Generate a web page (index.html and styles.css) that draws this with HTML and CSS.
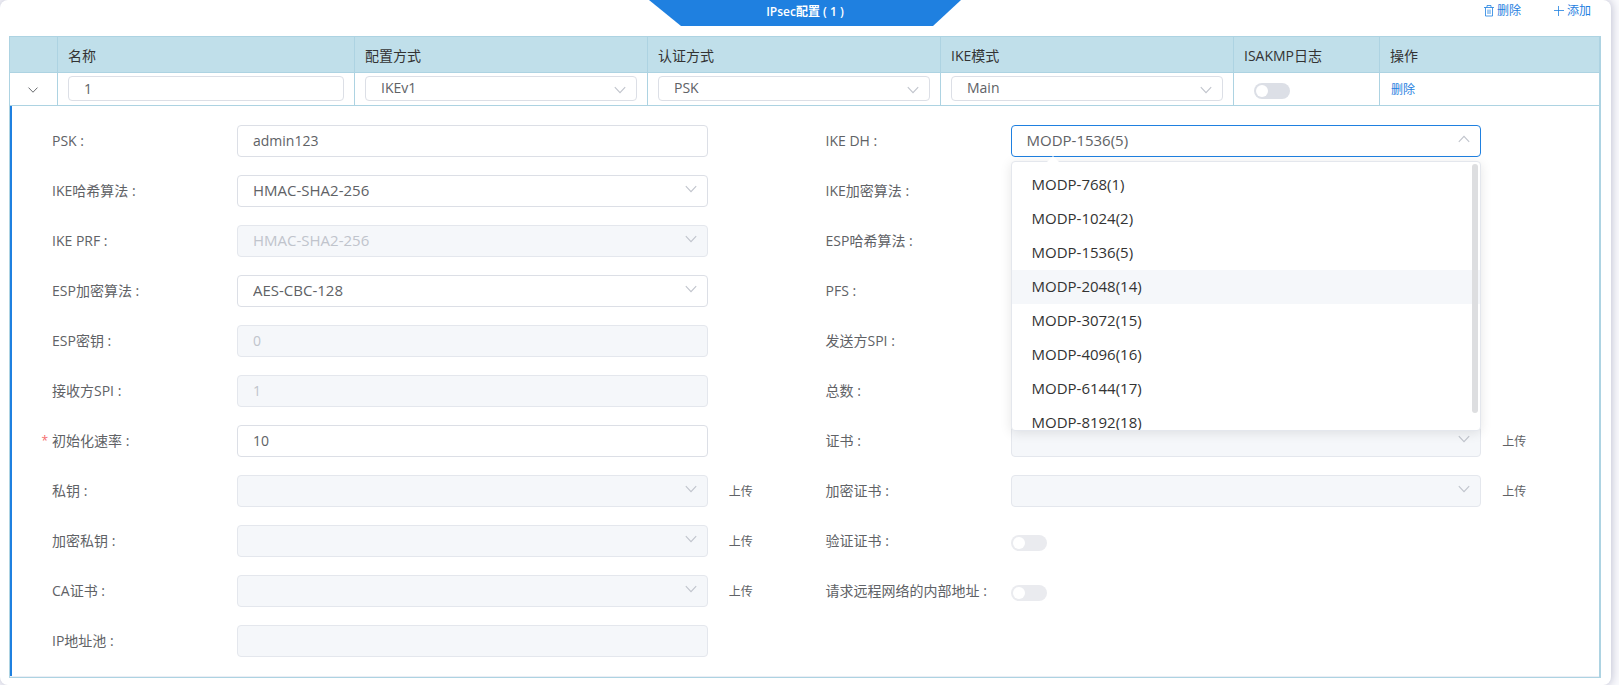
FILE: index.html
```html
<!DOCTYPE html>
<html lang="zh-CN">
<head>
<meta charset="utf-8">
<title>IPsec配置</title>
<link rel="stylesheet" href="styles.css">
</head>
<body>
<svg class="sprite" aria-hidden="true">
  <symbol id="chevron" viewBox="0 0 14 14"><path d="M1.8 4.2 7 9.6l5.2-5.4" fill="none" stroke="currentColor" stroke-width="1.1"/></symbol>
  <symbol id="trash" viewBox="0 0 12 12"><path d="M1 2.5h10M4 2.5v-2h4v2M2.5 2.5v8.5h7v-8.5M5 4.5v4.5M7 4.5v4.5" fill="none" stroke="currentColor" stroke-width="0.8"/></symbol>
  <symbol id="plus" viewBox="0 0 12 12"><path d="M5.5 1v10M1 5.5h10" fill="none" stroke="currentColor" stroke-width="0.8"/></symbol>
</svg>
<main class="card">
  <header class="topbar">
    <h1 class="banner">IPsec配置 ( 1 )</h1>
    <div class="actions">
      <button class="link" type="button"><svg class="action-icon"><use href="#trash"/></svg>删除</button>
      <button class="link" type="button"><svg class="action-icon"><use href="#plus"/></svg>添加</button>
    </div>
  </header>

  <table class="grid">
    <colgroup>
      <col class="col-expand"><col class="col-name"><col><col><col><col class="col-log"><col class="col-op">
    </colgroup>
    <thead>
      <tr><th></th><th>名称</th><th>配置方式</th><th>认证方式</th><th>IKE模式</th><th>ISAKMP日志</th><th>操作</th></tr>
    </thead>
    <tbody>
      <tr class="record">
        <td class="expand-cell"><button class="expand" type="button" aria-label="收起"><svg class="expand-icon"><use href="#chevron"/></svg></button></td>
        <td><input class="field small" type="text" value="1" aria-label="名称"></td>
        <td><div class="pick"><select class="field small" aria-label="配置方式"><option>IKEv1</option></select><svg class="arrow"><use href="#chevron"/></svg></div></td>
        <td><div class="pick"><select class="field small" aria-label="认证方式"><option>PSK</option></select><svg class="arrow"><use href="#chevron"/></svg></div></td>
        <td><div class="pick"><select class="field small" aria-label="IKE模式"><option>Main</option></select><svg class="arrow"><use href="#chevron"/></svg></div></td>
        <td class="log-cell"><input class="switch" type="checkbox" role="switch" aria-label="ISAKMP日志"></td>
        <td class="op-cell"><button class="link" type="button">删除</button></td>
      </tr>
      <tr>
        <td class="detail" colspan="7">
          <form class="form">
            <div class="item"><label for="psk">PSK :</label><div class="control"><input class="field" id="psk" type="text" value="admin123"></div></div>
            <div class="item"><label for="dh">IKE DH :</label>
              <div class="control pick">
                <select class="field open" id="dh"><option>MODP-1536(5)</option></select>
                <svg class="arrow up"><use href="#chevron"/></svg>
                <div class="menu">
                  <ul class="options" role="listbox" aria-label="IKE DH">
                    <li role="option">MODP-768(1)</li>
                    <li role="option">MODP-1024(2)</li>
                    <li role="option">MODP-1536(5)</li>
                    <li role="option" class="hover">MODP-2048(14)</li>
                    <li role="option">MODP-3072(15)</li>
                    <li role="option">MODP-4096(16)</li>
                    <li role="option">MODP-6144(17)</li>
                    <li role="option">MODP-8192(18)</li>
                  </ul>
                  <span class="thumb"></span>
                </div>
              </div>
            </div>
            <div class="item"><label for="ikehash">IKE哈希算法 :</label><div class="control pick"><select class="field" id="ikehash"><option>HMAC-SHA2-256</option></select><svg class="arrow"><use href="#chevron"/></svg></div></div>
            <div class="item"><label for="ikeenc">IKE加密算法 :</label><div class="control pick"><select class="field" id="ikeenc"></select><svg class="arrow"><use href="#chevron"/></svg></div></div>
            <div class="item"><label for="prf">IKE PRF :</label><div class="control pick"><select class="field" id="prf" disabled><option>HMAC-SHA2-256</option></select><svg class="arrow"><use href="#chevron"/></svg></div></div>
            <div class="item"><label for="esphash">ESP哈希算法 :</label><div class="control pick"><select class="field" id="esphash"></select><svg class="arrow"><use href="#chevron"/></svg></div></div>
            <div class="item"><label for="espenc">ESP加密算法 :</label><div class="control pick"><select class="field" id="espenc"><option>AES-CBC-128</option></select><svg class="arrow"><use href="#chevron"/></svg></div></div>
            <div class="item"><label for="pfs">PFS :</label><div class="control pick"><select class="field" id="pfs"></select><svg class="arrow"><use href="#chevron"/></svg></div></div>
            <div class="item"><label for="espkey">ESP密钥 :</label><div class="control"><input class="field" id="espkey" type="text" value="0" disabled></div></div>
            <div class="item"><label for="outspi">发送方SPI :</label><div class="control"><input class="field" id="outspi" type="text" disabled></div></div>
            <div class="item"><label for="inspi">接收方SPI :</label><div class="control"><input class="field" id="inspi" type="text" value="1" disabled></div></div>
            <div class="item"><label for="total">总数 :</label><div class="control"><input class="field" id="total" type="text"></div></div>
            <div class="item"><label class="required" for="rate">初始化速率 :</label><div class="control"><input class="field" id="rate" type="text" value="10"></div></div>
            <div class="item"><label for="cert">证书 :</label><div class="control pick"><select class="field" id="cert" disabled></select><svg class="arrow"><use href="#chevron"/></svg></div><button class="upload" type="button">上传</button></div>
            <div class="item"><label for="key">私钥 :</label><div class="control pick"><select class="field" id="key" disabled></select><svg class="arrow"><use href="#chevron"/></svg></div><button class="upload" type="button">上传</button></div>
            <div class="item"><label for="enccert">加密证书 :</label><div class="control pick"><select class="field" id="enccert" disabled></select><svg class="arrow"><use href="#chevron"/></svg></div><button class="upload" type="button">上传</button></div>
            <div class="item"><label for="enckey">加密私钥 :</label><div class="control pick"><select class="field" id="enckey" disabled></select><svg class="arrow"><use href="#chevron"/></svg></div><button class="upload" type="button">上传</button></div>
            <div class="item"><label for="verify">验证证书 :</label><div class="control toggle"><input class="switch" id="verify" type="checkbox" role="switch" disabled></div></div>
            <div class="item"><label for="ca">CA证书 :</label><div class="control pick"><select class="field" id="ca" disabled></select><svg class="arrow"><use href="#chevron"/></svg></div><button class="upload" type="button">上传</button></div>
            <div class="item"><label for="inner">请求远程网络的内部地址 :</label><div class="control toggle"><input class="switch" id="inner" type="checkbox" role="switch" disabled></div></div>
            <div class="item"><label for="pool">IP地址池 :</label><div class="control"><input class="field" id="pool" type="text" disabled></div></div>
          </form>
        </td>
      </tr>
    </tbody>
  </table>
</main>
</body>
</html>
```

FILE: styles.css
```css
* { box-sizing: border-box; }

body {
  margin: 0;
  background: #fafafd;
  color: #606266;
  font: 14px/20px "Open Sans", "Noto Sans CJK SC", sans-serif;
}

button, input, select { font: inherit; }
button { padding: 0; border: 0; background: none; cursor: pointer; }

.sprite { position: absolute; width: 0; height: 0; }

.card {
  margin-right: 8px;
  padding: 0 10px 7px 9px;
  background: #fff;
  border-radius: 8px;
  box-shadow: 0 0 10px 1px #bfc1d2;
}

.topbar {
  display: grid;
  grid-template-columns: 1fr 312px 1fr;
  height: 36px;
}

.banner {
  grid-column: 2;
  height: 26px;
  margin: 0;
  background: #1f80e0;
  clip-path: polygon(0 0, 100% 0, 284px 100%, 32px 100%);
  color: #fff;
  font-size: 12px;
  font-weight: 600;
  line-height: 24px;
  text-align: center;
}

.actions {
  display: flex;
  justify-content: flex-end;
  gap: 32px;
  height: 22px;
  padding-right: 10px;
}

.link {
  display: inline-flex;
  align-items: center;
  gap: 2px;
  color: #1f80e0;
  font-size: 12px;
}

.action-icon { width: 12px; height: 12px; }

.grid {
  width: 100%;
  table-layout: fixed;
  border: 1px solid #add3e2;
  border-right-width: 2px;
  border-spacing: 0;
}

.col-expand { width: 48px; }
.col-name { width: 297px; }
.col-log { width: 146px; }
.col-op { width: 219px; }

.grid th, .grid td {
  padding: 0 10px;
  border-bottom: 1px solid #add3e2;
  text-align: left;
}

.grid th:not(:last-child), .record td:not(:last-child) { border-right: 1px solid #add3e2; }

.grid th {
  height: 36px;
  padding-top: 2px;
  background: #c0dfea;
  color: #333;
  font-weight: 400;
}

.record td { height: 33px; padding-bottom: 2px; }
.record .expand-cell { padding: 2px 11px 0 10px; }
.expand, .expand-icon { display: block; width: 12px; height: 12px; margin: 0 auto; color: #606266; }
.record .log-cell { padding: 3px 10px 0 20px; }
.record .op-cell { padding: 1px 11px 0; }

.field {
  display: block;
  width: 100%;
  height: 32px;
  margin: 0;
  padding: 0 15px 2px;
  border: 1px solid #dcdfe6;
  border-radius: 4px;
  outline: 0;
  appearance: none;
  background: #fff;
  color: #606266;
}

.field.small { height: 25px; padding-bottom: 0; }
.field:disabled { border-color: #e4e7ed; background: #f5f7fa; color: #c0c4cc; opacity: 1; }
.field.open { border-color: #1f80e0; }
.form select { font-size: 15px; }

.pick { position: relative; }

.arrow {
  position: absolute;
  top: 7px;
  right: 10px;
  width: 14px;
  height: 14px;
  color: #c0c4cc;
  pointer-events: none;
}

.arrow.up { transform: rotate(180deg); }

.switch {
  display: block;
  width: 36px;
  height: 16px;
  margin: 0;
  border: 2px solid transparent;
  border-radius: 8px;
  appearance: none;
  background: #dcdfe6 border-box;
}

.switch::before {
  content: "";
  display: block;
  width: 12px;
  height: 12px;
  border-radius: 50%;
  background: #fff;
}

.switch:disabled { background-color: #eaebef; }

.grid .detail { padding: 0; border-bottom-color: #ebeef5; }

.form {
  display: grid;
  grid-template-columns: 1fr 1fr;
  row-gap: 18px;
  padding: 19px 0 19px 40px;
  border-left: 2px solid #1f80e0;
}

.item {
  display: grid;
  grid-template-columns: 185px minmax(0, 4fr) minmax(0, 1fr);
  align-items: center;
  height: 32px;
}

.item label { white-space: nowrap; line-height: 32px; }

.required { position: relative; }
.required::before { content: "*"; position: absolute; right: 100%; margin-right: 4px; color: #f56c6c; font-size: 12px; }

.toggle { padding-top: 4px; }

.upload { justify-self: start; margin-left: 21px; padding-top: 2px; color: #606266; font-size: 12px; }

.menu {
  position: absolute;
  z-index: 2;
  top: 36px;
  left: 0;
  width: 100%;
  height: 270px;
  border: 1px solid #e4e7ed;
  border-radius: 4px;
  background: #fff;
  box-shadow: 0 2px 12px rgba(0, 0, 0, 0.1);
}

.menu::before {
  content: "";
  position: absolute;
  top: -6px;
  left: 35px;
  border: 6px solid transparent;
  border-top: 0;
  border-bottom-color: #fff;
}

.options {
  height: 100%;
  margin: 0;
  padding: 6px 0;
  overflow: hidden;
  list-style: none;
  color: #333;
  font-size: 15px;
  line-height: 32px;
}

.options li { padding: 0 20px 2px; }
.options .hover { background: #f5f7fa; }

.thumb {
  position: absolute;
  top: 2px;
  right: 2px;
  width: 6px;
  height: 249px;
  border-radius: 3px;
  background: #dddee0;
}
```
